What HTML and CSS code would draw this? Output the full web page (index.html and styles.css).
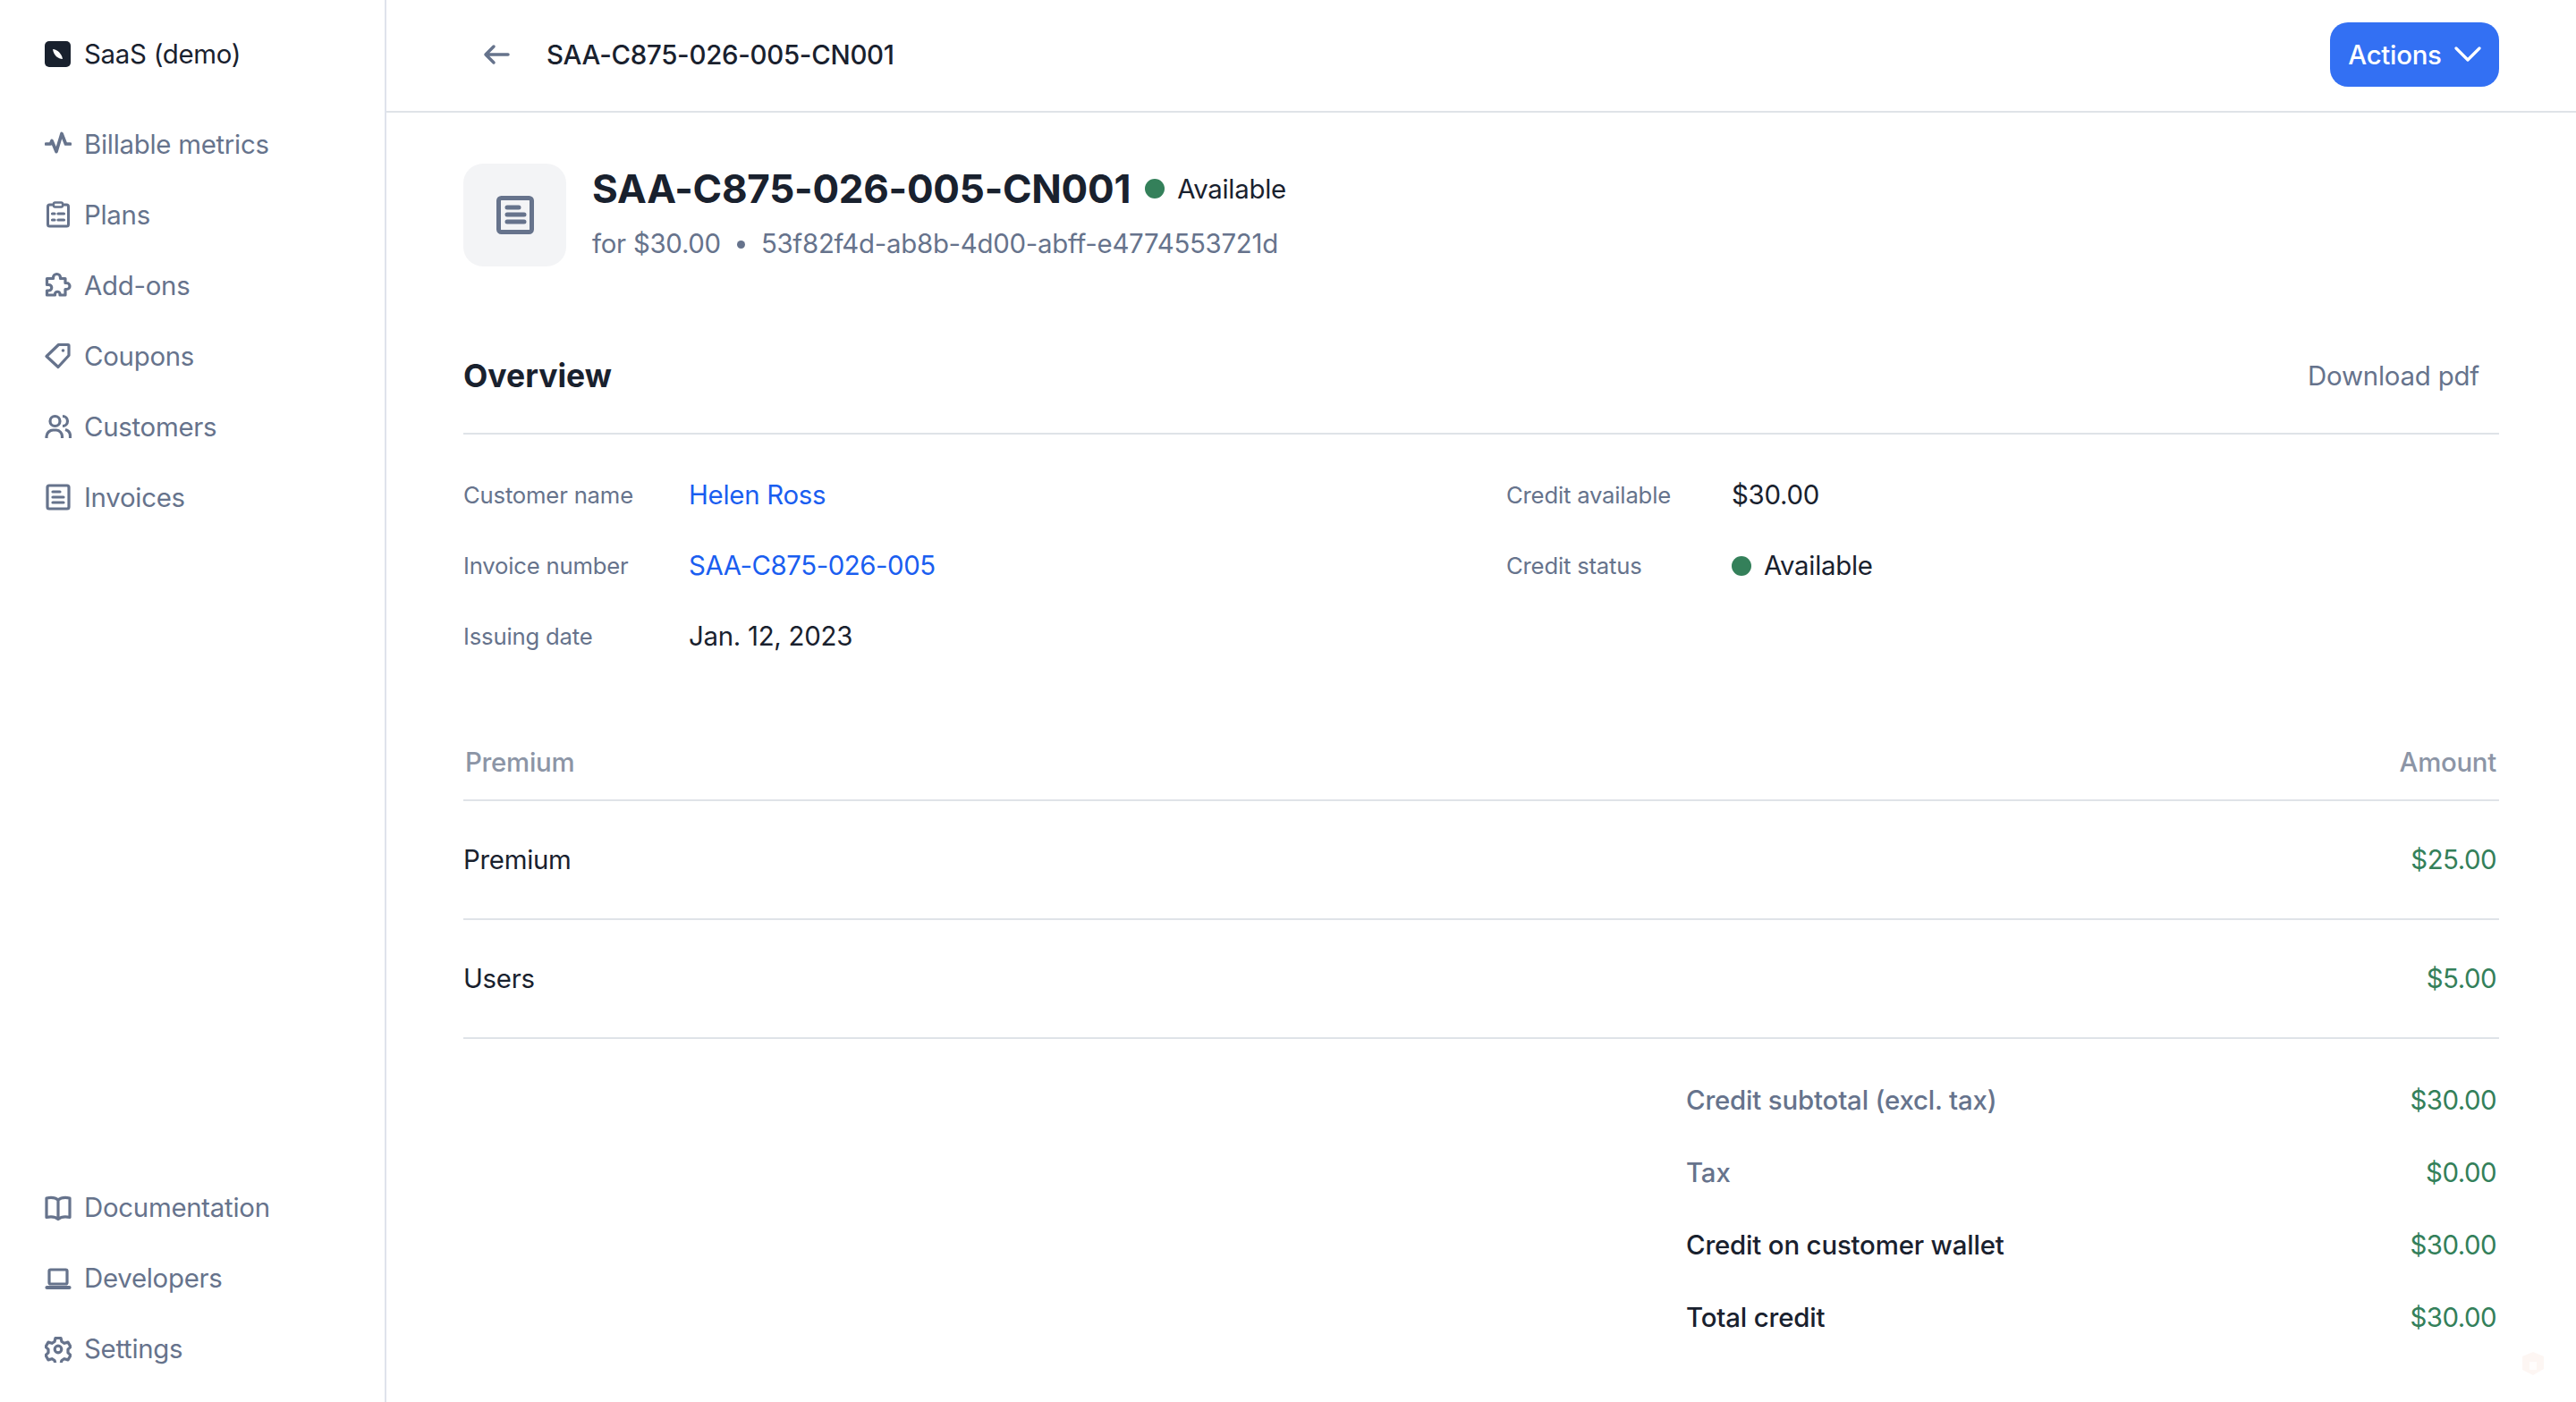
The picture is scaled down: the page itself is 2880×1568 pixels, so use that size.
FILE: index.html
```html
<!DOCTYPE html>
<html lang="en">
<head>
<meta charset="utf-8">
<title>SAA-C875-026-005-CN001</title>
<link rel="stylesheet" href="styles.css">
</head>
<body>
<div class="app">
  <aside class="sidebar">
    <div class="org">
      <svg class="icon" viewBox="0 0 30 30"><rect width="29" height="29" rx="5" fill="#19212e"/><path d="M9 9c5 0 10 5 11 11-5 0-10-4-11-11z" fill="#fff"/></svg>
      <span>SaaS (demo)</span>
    </div>
    <nav class="nav nav-top">
      <a class="nav-item"><svg class="icon" viewBox="0 0 30 30"><path d="M1.500 15h5l1.500-3.500 5 12 6-20 4.500 11.500h5" fill="none" stroke="currentColor" stroke-width="3.700" stroke-linecap="round" stroke-linejoin="round"/></svg><span>Billable metrics</span></a>
      <a class="nav-item"><svg class="icon" viewBox="0 0 30 30"><rect x="3.500" y="4" width="23" height="24" rx="2" fill="none" stroke="currentColor" stroke-width="3"/><rect x="10" y="1.500" width="10" height="5" rx="1.500" fill="#fff" stroke="currentColor" stroke-width="2.400"/><path d="M8.500 14h2.500M15 14h6.500M8.500 21h2.500M15 21h6.500" stroke="currentColor" stroke-width="3.200" stroke-linecap="round"/></svg><span>Plans</span></a>
      <a class="nav-item"><svg class="icon" viewBox="0 0 30 30"><path d="M9.500 7.500v-1a4 4 0 0 1 8 0v1h5.500v5h1.500a3.500 3.500 0 0 1 0 7h-1.500v6.500h-6v-1.500a2.800 2.800 0 0 0-5.500 0v1.500H2.500v-5h2a3 3 0 0 0 0-6.500h-2V7.500z" fill="none" stroke="currentColor" stroke-width="3.200" stroke-linejoin="round"/></svg><span>Add-ons</span></a>
      <a class="nav-item"><svg class="icon" viewBox="0 0 30 30"><path d="M2 15.500 15.500 2.500h10.500a1 1 0 0 1 1 1v11L15 27.500z" fill="none" stroke="currentColor" stroke-width="3.200" stroke-linejoin="round"/><circle cx="20.500" cy="9" r="1.800" fill="currentColor"/></svg><span>Coupons</span></a>
      <a class="nav-item"><svg class="icon" viewBox="0 0 30 30"><circle cx="11.500" cy="9" r="5.500" fill="none" stroke="currentColor" stroke-width="3.200"/><path d="M2 28v-2a7.500 7.500 0 0 1 7.500-7h3.500a7 7 0 0 1 6.500 7v2M20 3.500a5.500 5.500 0 0 1 0 11M23 18.500c3.500 1 5.500 3.500 5.500 7v2.500" fill="none" stroke="currentColor" stroke-width="3.200"/></svg><span>Customers</span></a>
      <a class="nav-item"><svg class="icon" viewBox="0 0 30 30"><rect x="3" y="2" width="24" height="26" rx="2" fill="none" stroke="currentColor" stroke-width="3.200"/><path d="M9 9h8M9 15h12M9 21h12" stroke="currentColor" stroke-width="3.200" stroke-linecap="round"/></svg><span>Invoices</span></a>
    </nav>
    <nav class="nav nav-bottom">
      <a class="nav-item"><svg class="icon" viewBox="0 0 30 30"><path d="M15 6C12 3.500 7 3 2 4v21.500c5-1 10-.5 13 2 3-2.500 8-3 13-2V4c-5-1-10-.5-13 2zM15 6v21" fill="none" stroke="currentColor" stroke-width="3.200" stroke-linejoin="round"/></svg><span>Documentation</span></a>
      <a class="nav-item"><svg class="icon" viewBox="0 0 30 30"><rect x="5" y="5" width="20" height="16" rx="1.500" fill="none" stroke="currentColor" stroke-width="3.200"/><path d="M2.500 25h25" stroke="currentColor" stroke-width="4.200" stroke-linecap="round"/></svg><span>Developers</span></a>
      <a class="nav-item"><svg class="icon" viewBox="0 0 30 30"><path d="M12 2.500h6l1 4 3 1.800 4-1.200 3 5.200-3 2.900v3.600l3 2.900-3 5.200-4-1.200-3 1.800-1 4h-6l-1-4-3-1.800-4 1.200-3-5.200 3-2.900v-3.600L1 12.300l3-5.200 4 1.200 3-1.800z" fill="none" stroke="currentColor" stroke-width="3.200" stroke-linejoin="round"/><circle cx="15" cy="15" r="3.800" fill="none" stroke="currentColor" stroke-width="3.200"/></svg><span>Settings</span></a>
    </nav>
  </aside>
  <main class="main">
    <header class="topbar">
      <div class="topbar-left">
        <svg class="back" viewBox="0 0 30 24"><path d="M28 12H3M12 3l-9 9 9 9" fill="none" stroke="currentColor" stroke-width="3.500" stroke-linecap="round" stroke-linejoin="round"/></svg>
        <span>SAA-C875-026-005-CN001</span>
      </div>
      <button class="actions"><span>Actions</span><svg class="chevron" viewBox="0 0 30 18"><path d="M2 2l13 13L28 2" fill="none" stroke="currentColor" stroke-width="3.200" stroke-linecap="round" stroke-linejoin="round"/></svg></button>
    </header>
    <div class="content">
      <section class="hero">
        <div class="hero-icon"><svg class="hero-svg" viewBox="0 0 42 43"><rect x="2.500" y="2.500" width="37" height="38" rx="3" fill="none" stroke="currentColor" stroke-width="5"/><path d="M12 13h13M12 21h19M12 29h19" stroke="currentColor" stroke-width="5" stroke-linecap="round"/></svg></div>
        <div class="hero-text">
          <div class="hero-title"><h1>SAA-C875-026-005-CN001</h1><span class="status status-hero"><i class="dot"></i>Available</span></div>
          <div class="hero-sub"><span>for $30.00</span><i class="sep"></i><span>53f82f4d-ab8b-4d00-abff-e4774553721d</span></div>
        </div>
      </section>
      <section class="overview-head">
        <h2>Overview</h2>
        <a class="download">Download pdf</a>
      </section>
      <section class="details">
        <div class="detail-col">
          <div class="detail"><span class="label">Customer name</span><a class="link">Helen Ross</a></div>
          <div class="detail"><span class="label">Invoice number</span><a class="link link-num">SAA-C875-026-005</a></div>
          <div class="detail"><span class="label">Issuing date</span><span class="value">Jan. 12, 2023</span></div>
        </div>
        <div class="detail-col">
          <div class="detail"><span class="label">Credit available</span><span class="value">$30.00</span></div>
          <div class="detail"><span class="label">Credit status</span><span class="value status"><i class="dot"></i>Available</span></div>
        </div>
      </section>
      <section class="table">
        <div class="thead"><span>Premium</span><span>Amount</span></div>
        <div class="trow"><span>Premium</span><span class="money">$25.00</span></div>
        <div class="trow"><span>Users</span><span class="money">$5.00</span></div>
      </section>
      <section class="totals">
        <div class="total muted"><span>Credit subtotal (excl. tax)</span><span class="money">$30.00</span></div>
        <div class="total muted"><span>Tax</span><span class="money">$0.00</span></div>
        <div class="total strong"><span>Credit on customer wallet</span><span class="money">$30.00</span></div>
        <div class="total strong"><span>Total credit</span><span class="money">$30.00</span></div>
      </section>
    </div>
    <svg class="gift" viewBox="0 0 28 28"><path d="M14 1l12 5v14l-12 7-12-6V6z" fill="#fdf6f3"/><path d="M10 12h8v9h-8z" fill="#fffdfc"/></svg>
  </main>
</div>
</body>
</html>
```
FILE: styles.css
```css
* { box-sizing: border-box; }
html, body { margin: 0; height: 100%; }
body { font-family: Inter, "Liberation Sans", sans-serif; font-size: 29.4px; letter-spacing: -0.27px; color: #19212e; background: #fff; overflow: hidden; }
.app { display: flex; height: 1568px; }
.sidebar { width: 432px; flex: none; border-right: 2px solid #dfe3ec; padding: 0 50px; display: flex; flex-direction: column; }
.icon { width: 30px; height: 30px; flex: none; }
.org { display: flex; align-items: center; gap: 14px; height: 121.5px; flex: none; }
.nav { display: flex; flex-direction: column; color: #66738c; }
.nav-item { display: flex; align-items: center; gap: 14px; height: 79px; }
.nav-bottom { margin-top: auto; padding-bottom: 20px; }
.main { flex: 1; position: relative; min-width: 0; }
.topbar { height: 126px; border-bottom: 2px solid #dfe3e8; display: flex; align-items: center; justify-content: space-between; padding: 0 86px 2px 108px; }
.topbar-left { display: flex; align-items: center; gap: 41px; font-weight: 500; }
.back { width: 30px; height: 24px; color: #66738c; }
.actions { height: 72px; width: 189px; border: 0; border-radius: 20px; background: #3370f3; color: #fff; font: 500 29.4px Inter, sans-serif; letter-spacing: -0.27px; display: flex; align-items: center; justify-content: center; gap: 14px; padding: 0; }
.chevron { width: 30px; height: 18px; }
.content { padding: 57px 86px 0; }
.hero { display: flex; gap: 29px; height: 115px; }
.hero-icon { width: 115px; height: 115px; border-radius: 22px; background: #f3f4f6; display: flex; align-items: center; justify-content: center; }
.hero-svg { width: 42px; height: 43px; color: #66738c; }
.hero-text { display: flex; flex-direction: column; justify-content: space-between; }
.hero-title { display: flex; align-items: center; gap: 16px; }
h1 { margin: 0; font-size: 44px; line-height: 56px; font-weight: 700; letter-spacing: -0.25px; }
.status { display: inline-flex; align-items: center; gap: 14px; }
.dot { width: 22px; height: 22px; border-radius: 50%; background: #34805a; display: block; }
.hero-sub { display: flex; align-items: center; gap: 18px; color: #66738c; line-height: 40px; padding-bottom: 5px; }
.sep { width: 9px; height: 9px; border-radius: 50%; background: #66738c; display: block; }
.overview-head { display: flex; align-items: center; justify-content: space-between; height: 122px; margin-top: 66px; border-bottom: 2px solid #dfe3e8; padding: 0 22px 7px 0; }
h2 { margin: 0; font-size: 35.500px; font-weight: 700; letter-spacing: 0; }
.download { color: #66738c; font-weight: 400; letter-spacing: -0.2px; }
.details { display: grid; grid-template-columns: 1166px 1fr; padding-top: 28px; }
.detail-col { display: flex; flex-direction: column; }
.detail { display: flex; align-items: center; height: 79.2px; }
.label { width: 252px; flex: none; font-size: 25.700px; letter-spacing: -0.2px; color: #66738c; }
.link { color: #1a5ef0; }
.link-num { letter-spacing: -0.45px; }
.table { margin-top: 62px; }
.thead { display: flex; justify-content: space-between; height: 82px; align-items: center; border-bottom: 2px solid #dfe3e8; color: #8c95a6; font-weight: 500; padding: 0 3px 2px 2px; }
.trow { display: flex; justify-content: space-between; align-items: center; height: 133px; border-bottom: 2px solid #dfe3e8; padding-right: 3px; }
.money { color: #34805a; letter-spacing: -0.5px; }
.totals { margin-top: 28px; margin-left: 1367px; }
.total { display: flex; justify-content: space-between; align-items: center; height: 81px; font-weight: 500; letter-spacing: -0.17px; padding-right: 3px; }
.total .money { font-weight: 400; letter-spacing: -0.5px; }
.muted { color: #66738c; }
.strong { color: #19212e; }
.gift { position: absolute; right: 34px; bottom: 29px; width: 28px; height: 28px; }
```
